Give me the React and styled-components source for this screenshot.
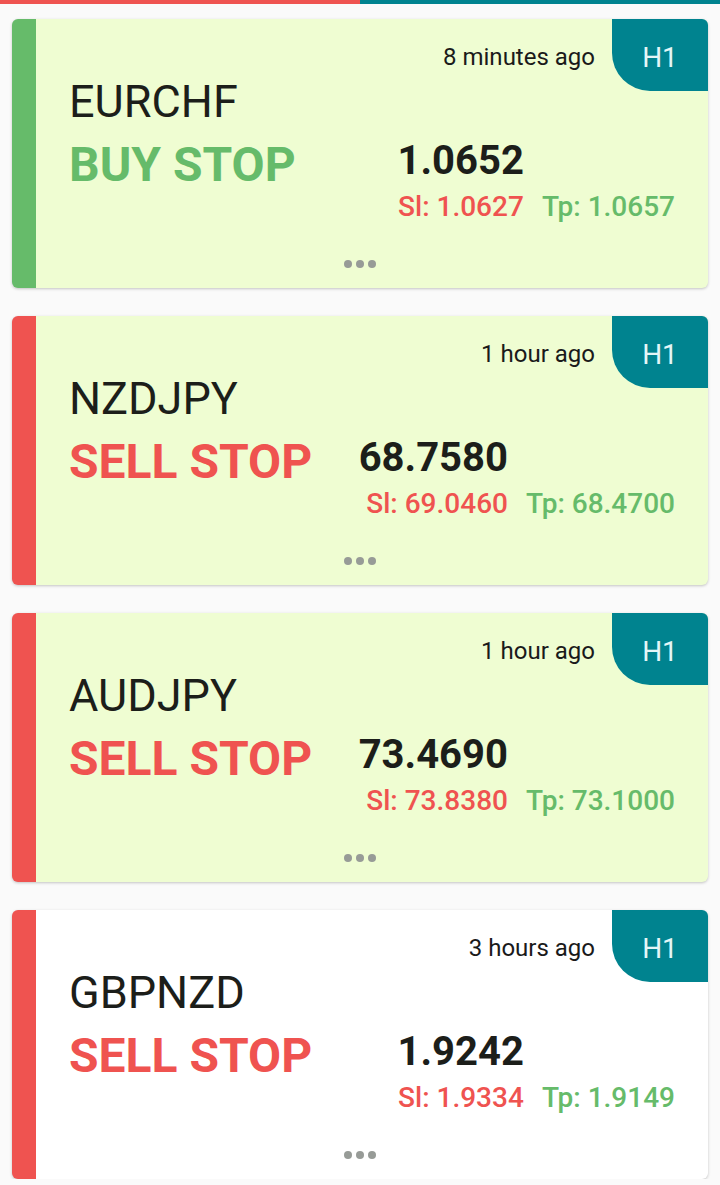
import React from "react";
import styled, { createGlobalStyle } from "styled-components";

const colors = {
  red: "#ef5350",
  green: "#66bb6a",
  teal: "#00838f",
  text: "#1c1e1a",
};

const signals = [
  { symbol: "EURCHF", side: "buy", action: "BUY STOP", price: "1.0652", sl: "1.0627", tp: "1.0657", time: "8 minutes ago", tf: "H1", fresh: true },
  { symbol: "NZDJPY", side: "sell", action: "SELL STOP", price: "68.7580", sl: "69.0460", tp: "68.4700", time: "1 hour ago", tf: "H1", fresh: true },
  { symbol: "AUDJPY", side: "sell", action: "SELL STOP", price: "73.4690", sl: "73.8380", tp: "73.1000", time: "1 hour ago", tf: "H1", fresh: true },
  { symbol: "GBPNZD", side: "sell", action: "SELL STOP", price: "1.9242", sl: "1.9334", tp: "1.9149", time: "3 hours ago", tf: "H1", fresh: false },
];

const GlobalStyle = createGlobalStyle`
  body {
    margin: 0;
    background: #fafafa;
    font-family: Roboto, "Liberation Sans", sans-serif;
    color: ${colors.text};
  }
`;

export default function App() {
  return (
    <>
      <GlobalStyle />
      <TopBar>
        <BarPart color={colors.red} />
        <BarPart color={colors.teal} />
      </TopBar>
      <List>
        {signals.map((s) => (
          <SignalCard key={s.symbol} signal={s} />
        ))}
      </List>
    </>
  );
}

const SignalCard = ({ signal }) => {
  const sideColor = signal.side === "buy" ? colors.green : colors.red;
  return (
    <Card stripe={sideColor} fresh={signal.fresh}>
      <Badge>{signal.tf}</Badge>
      <TimeRow>{signal.time}</TimeRow>
      <Symbol>{signal.symbol}</Symbol>
      <Body>
        <Action color={sideColor}>{signal.action}</Action>
        <Levels>
          <Price>{signal.price}</Price>
          <span />
          <Level color={colors.red}>Sl: {signal.sl}</Level>
          <Level color={colors.green}>Tp: {signal.tp}</Level>
        </Levels>
      </Body>
      <Dots>
        <Dot />
        <Dot />
        <Dot />
      </Dots>
    </Card>
  );
};

const TopBar = styled.div`
  display: flex;
  height: 4px;
`;

const BarPart = styled.div`
  flex: 1;
  background: ${(p) => p.color};
`;

const List = styled.div`
  display: flex;
  flex-direction: column;
  gap: 28px;
  padding: 15px 12px 0;
`;

const Card = styled.div`
  position: relative;
  box-sizing: border-box;
  height: 269px;
  padding: 0 33px;
  border-left: 24px solid ${(p) => p.stripe};
  border-radius: 6px;
  background: ${(p) => (p.fresh ? "#effdd2" : "#ffffff")};
  box-shadow: 0 1px 3px rgba(0, 0, 0, 0.22);
  display: flex;
  flex-direction: column;
`;

const Badge = styled.div`
  position: absolute;
  top: 0;
  right: 0;
  width: 96px;
  height: 72px;
  display: flex;
  align-items: center;
  justify-content: center;
  background: ${colors.teal};
  color: #e4f6f7;
  font-size: 28px;
  line-height: 1;
  padding-top: 5px;
  box-sizing: border-box;
  border-radius: 0 6px 0 38px;
`;

const TimeRow = styled.div`
  margin-top: 26px;
  padding-right: 80px;
  text-align: right;
  font-size: 24px;
  line-height: 24px;
  color: #1a1a1a;
`;

const Symbol = styled.div`
  margin-top: 10px;
  font-size: 45px;
  line-height: 45px;
  color: ${colors.text};
`;

const Body = styled.div`
  display: flex;
  justify-content: space-between;
  align-items: flex-start;
  margin-top: 17px;
`;

const Action = styled.div`
  font-size: 48px;
  line-height: 48px;
  font-weight: 700;
  color: ${(p) => p.color};
`;

const Levels = styled.div`
  display: grid;
  grid-template-columns: auto auto;
  column-gap: 18px;
  row-gap: 12px;
  justify-items: end;
`;

const Price = styled.div`
  font-size: 40px;
  line-height: 40px;
  font-weight: 700;
  color: ${colors.text};
`;

const Level = styled.div`
  font-size: 28px;
  line-height: 28px;
  font-weight: 500;
  color: ${(p) => p.color};
`;

const Dots = styled.div`
  display: flex;
  justify-content: center;
  gap: 4px;
  margin: auto 0 20px -24px;
`;

const Dot = styled.span`
  width: 8px;
  height: 8px;
  border-radius: 50%;
  background: #979b97;
`;
